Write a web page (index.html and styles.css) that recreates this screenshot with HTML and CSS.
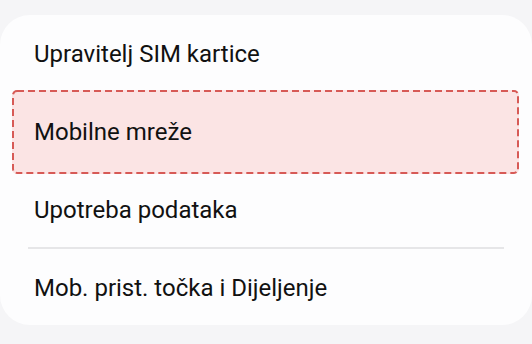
FILE: index.html
```
<!DOCTYPE html>
<html lang="hr">
<head>
  <meta charset="UTF-8" />
  <meta name="viewport" content="width=device-width, initial-scale=1.0"/>
  <title>Veze</title>
  <link rel="stylesheet" href="styles.css">
</head>
<body>
  <div class="card">
    <div class="row">Upravitelj SIM kartice</div>
    <div class="row selected">Mobilne mreže</div>
    <div class="row">Upotreba podataka</div>
    <div class="divider"></div>
    <div class="row">Mob. prist. točka i Dijeljenje</div>
  </div>
</body>
</html>
```

FILE: styles.css
```
body {
  margin: 0;
  background-color: #f5f5f7;
  font-family: Roboto, "Noto Sans", sans-serif;
  color: #111;
}

.card {
  margin-top: 15px;
  height: 310px;
  background-color: #fdfdfe;
  border-radius: 30px;
}

.row {
  height: 78px;
  display: flex;
  align-items: center;
  padding-left: 34px;
  font-size: 24px;
  box-sizing: border-box;
}

/* dashed outline drawn as svg so the dash length matches */
.row.selected {
  height: 84px;
  margin: -3px 13px -3px 12px;
  padding-left: 22px;
  background-color: #fbe4e4;
  background-image: url("data:image/svg+xml;utf8,<svg xmlns='http://www.w3.org/2000/svg' width='100%' height='100%'><rect width='100%' height='100%' rx='5' fill='none' stroke='%23d75a56' stroke-width='4' stroke-dasharray='7 4'/></svg>");
  border-radius: 5px;
}

.divider {
  height: 2px;
  background-color: #e6e6e8;
  margin: -2px 28px 0 28px;
}
```
